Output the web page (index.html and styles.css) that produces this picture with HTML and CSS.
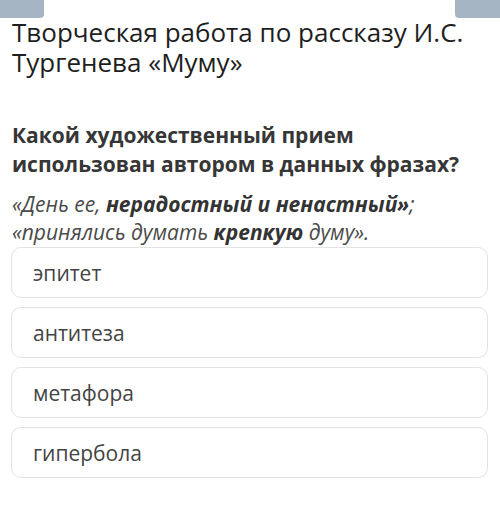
FILE: index.html
```html
<!DOCTYPE html>
<html lang="ru">

<head>
    <meta charset="UTF-8">
    <title>Муму</title>
    <link rel="stylesheet" href="styles.css">
</head>

<body>

    <div class="top-bar">
        <div class="tab tab-left"></div>
        <div class="tab tab-right"></div>
    </div>

    <h1 class="title">Творческая работа по рассказу И.С. Тургенева «Муму»</h1>

    <div class="question">
        <h2>Какой художественный прием использован автором в данных фразах?</h2>
        <p class="quote">«День ее, <b>нерадостный и ненастный»</b>;<br>«принялись думать <b>крепкую</b> думу».</p>
    </div>

    <ul class="answers">
        <li>эпитет</li>
        <li>антитеза</li>
        <li>метафора</li>
        <li>гипербола</li>
    </ul>

</body>

</html>
```

FILE: styles.css
```css
body {
    margin: 0;
    font-family: "Open Sans", sans-serif;
    background-color: #fff;
    color: #222;
}

/* Top grey tabs */
.top-bar {
    display: flex;
    justify-content: space-between;
    height: 18px;
}

.tab {
    width: 44px;
    height: 18px;
    background-color: #a5b5c4;
}

.tab-left {
    border-bottom-right-radius: 4px;
}

.tab-right {
    width: 45px;
    border-bottom-left-radius: 4px;
}

.title {
    margin: -1px 12px 0;
    font-size: 26px;
    font-weight: normal;
    line-height: 30px;
    color: #1e1e1e;
}

.question {
    margin: 44px 12px 0;
}

.question h2 {
    margin: 0;
    font-size: 21px;
    font-weight: bold;
    line-height: 29px;
    color: #363636;
}

.quote {
    margin: 11px 0 0;
    font-size: 21px;
    font-style: italic;
    line-height: 28px;
    color: #4a4a4a;
}

.quote b {
    color: #333;
}

/* Answer options */
.answers {
    list-style: none;
    margin: 1px 12px 0 11px;
    padding: 0;
    display: flex;
    flex-direction: column;
    gap: 9px;
}

.answers li {
    height: 49px;
    display: flex;
    align-items: center;
    padding: 0 21px;
    border: 1px solid #e3e3e3;
    border-radius: 10px;
    font-size: 21px;
    color: #444;
}
```
